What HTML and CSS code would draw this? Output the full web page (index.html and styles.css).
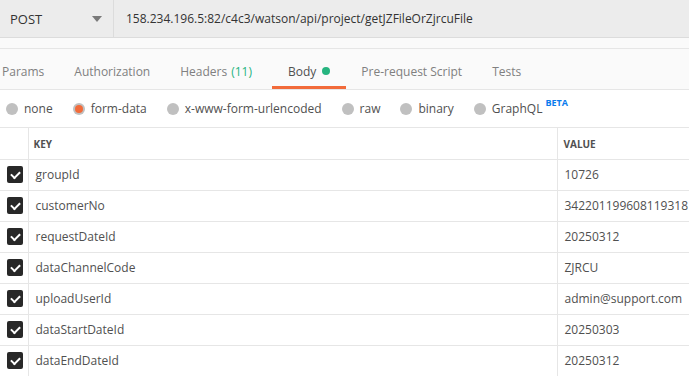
FILE: index.html
```html
<!DOCTYPE html>
<html lang="en">
<head>
  <meta charset="UTF-8">
  <title>Request</title>
  <link rel="stylesheet" href="styles.css">
</head>
<body>
  <div class="url-bar">
    <div class="method">
      <span>POST</span>
      <span class="caret"></span>
    </div>
    <div class="url">158.234.196.5:82/c4c3/watson/api/project/getJZFileOrZjrcuFile</div>
  </div>

  <div class="strip"></div>

  <nav class="tabs">
    <div class="tab">Params</div>
    <div class="tab">Authorization</div>
    <div class="tab">Headers <span class="count">(11)</span></div>
    <div class="tab active">Body <span class="dot"></span></div>
    <div class="tab">Pre-request Script</div>
    <div class="tab">Tests</div>
  </nav>

  <div class="body-types">
    <label class="radio"><span class="circle"></span>none</label>
    <label class="radio"><span class="circle checked"></span>form-data</label>
    <label class="radio"><span class="circle"></span>x-www-form-urlencoded</label>
    <label class="radio"><span class="circle"></span>raw</label>
    <label class="radio"><span class="circle"></span>binary</label>
    <label class="radio"><span class="circle"></span>GraphQL<sup class="beta">BETA</sup></label>
  </div>

  <table class="params">
    <thead>
      <tr>
        <th class="col-check"></th>
        <th class="col-key">KEY</th>
        <th class="col-value">VALUE</th>
      </tr>
    </thead>
    <tbody>
      <tr><td class="col-check"><span class="checkbox"></span></td><td>groupId</td><td>10726</td></tr>
      <tr><td class="col-check"><span class="checkbox"></span></td><td>customerNo</td><td>342201199608119318</td></tr>
      <tr><td class="col-check"><span class="checkbox"></span></td><td>requestDateId</td><td>20250312</td></tr>
      <tr><td class="col-check"><span class="checkbox"></span></td><td>dataChannelCode</td><td>ZJRCU</td></tr>
      <tr><td class="col-check"><span class="checkbox"></span></td><td>uploadUserId</td><td>admin@support.com</td></tr>
      <tr><td class="col-check"><span class="checkbox"></span></td><td>dataStartDateId</td><td>20250303</td></tr>
      <tr><td class="col-check"><span class="checkbox"></span></td><td>dataEndDateId</td><td>20250312</td></tr>
    </tbody>
  </table>
</body>
</html>
```

FILE: styles.css
```css
:root {
  --text-color: #505050;
  --text-light: #808080;
  --border-color: #e6e6e6;
  --accent: #f26b3a;
  --green: #26b47f;
  --blue: #097bed;
}

* {
  margin: 0;
  padding: 0;
  box-sizing: border-box;
}

body {
  font-family: "Open Sans", sans-serif;
  font-size: 12px;
  color: var(--text-color);
  background-color: #ffffff;
  overflow: hidden;
}

/* URL bar */
.url-bar {
  display: flex;
  height: 38px;
  background-color: #ececec;
  border-bottom: 1px solid #dcdcdc;
}

.method {
  width: 114px;
  display: flex;
  align-items: center;
  justify-content: space-between;
  padding: 0 11px 0 10px;
  border-right: 1px solid #dcdcdc;
  color: #333333;
  font-size: 13px;
}

.caret {
  width: 0;
  height: 0;
  border-left: 5px solid transparent;
  border-right: 5px solid transparent;
  border-top: 6px solid #7a7a7a;
}

.url {
  display: flex;
  align-items: center;
  padding-left: 12px;
  color: #333333;
}

.strip {
  height: 11px;
  background-color: #fafafa;
  border-bottom: 1px solid var(--border-color);
}

/* Tabs */
.tabs {
  display: flex;
  height: 41px;
  margin-left: -13px;
  background-color: #fafafa;
  border-bottom: 1px solid var(--border-color);
}

.tab {
  padding: 13px 15px 6px;
  line-height: 17px;
  color: var(--text-light);
  border-bottom: 3px solid transparent;
  white-space: nowrap;
  display: flex;
  align-items: center;
}

.tab .count {
  color: var(--green);
  margin-left: 4px;
}

.tab.active {
  color: var(--text-color);
  border-bottom-color: var(--accent);
  padding: 13px 16px 6px;
  margin-left: 5px;
}

.dot {
  width: 8px;
  height: 8px;
  border-radius: 50%;
  background-color: var(--green);
  margin-left: 6px;
}

/* Body types */
.body-types {
  display: flex;
  align-items: center;
  height: 38px;
  padding-left: 6px;
  border-bottom: 1px solid var(--border-color);
}

.radio {
  display: flex;
  align-items: center;
  margin-right: 20px;
  white-space: nowrap;
}

.circle {
  width: 12px;
  height: 12px;
  border-radius: 50%;
  background-color: #c0c0c0;
  margin-right: 6px;
  position: relative;
}

.circle.checked::after {
  content: "";
  position: absolute;
  top: 2px;
  left: 2px;
  width: 8px;
  height: 8px;
  border-radius: 50%;
  background-color: var(--accent);
}

.beta {
  color: var(--blue);
  font-size: 9px;
  font-weight: 700;
  margin-left: 3px;
  position: relative;
  top: -6px;
  vertical-align: baseline;
}

/* Params table */
.params {
  border-collapse: collapse;
  table-layout: fixed;
  width: 100%;
}

.params th,
.params td {
  height: 31px;
  border-bottom: 1px solid var(--border-color);
  border-left: 1px solid var(--border-color);
  text-align: left;
  white-space: nowrap;
  overflow: hidden;
}

.params th {
  font-size: 10px;
  font-weight: 700;
  padding-left: 5px;
  padding-top: 1px;
}

.params td {
  padding-left: 7px;
}

.params .col-check {
  width: 28px;
  border-left: none;
  padding-left: 7px;
}

.params .col-key {
  width: 529px;
}

.params th.col-value {
  padding-left: 6px;
}

.checkbox {
  display: block;
  width: 16px;
  height: 17px;
  background-color: #282828;
  border-radius: 2px;
  position: relative;
}

.checkbox::after {
  content: "";
  position: absolute;
  top: 5px;
  left: 4px;
  width: 7px;
  height: 4px;
  border-left: 2.5px solid #ffffff;
  border-bottom: 2.5px solid #ffffff;
  transform: rotate(-45deg);
}
```
